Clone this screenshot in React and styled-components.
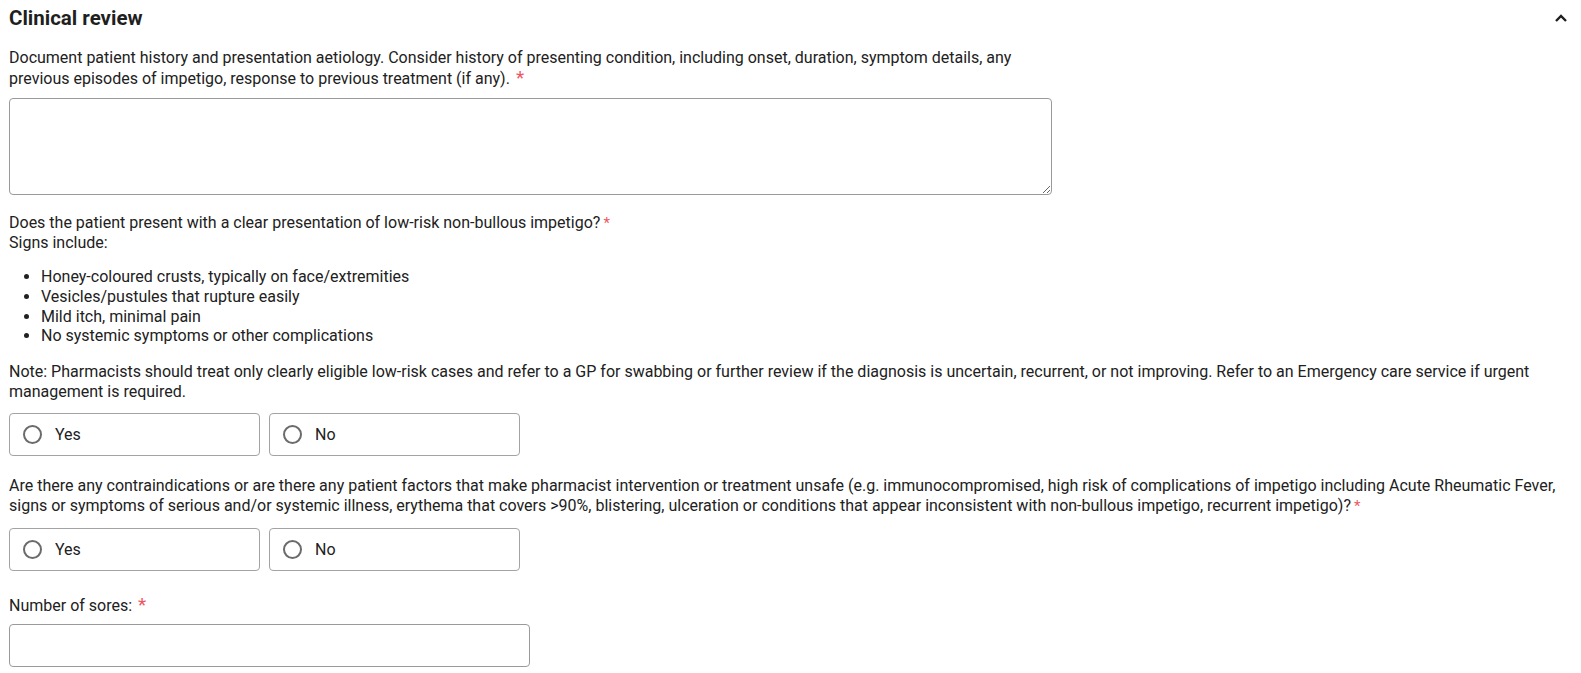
import React from "react";
import styled, { createGlobalStyle } from "styled-components";

const GlobalStyle = createGlobalStyle`
  body {
    margin: 0;
    background: #fff;
    font-family: Roboto, "Liberation Sans", sans-serif;
    color: #212121;
  }
`;

const Section = styled.section`
  padding: 0 9px;
  font-size: 16px;
`;

const Header = styled.div`
  height: 36px;
  display: flex;
  align-items: center;
  justify-content: space-between;
  padding-right: 4px;
`;

const Title = styled.h2`
  margin: 0;
  font-size: 20.5px;
  font-weight: 700;
  color: #1f1f1f;
`;

const Field = styled.div`
  margin-top: ${(p) => p.top || 0}px;
`;

const Label = styled.div`
  line-height: ${(p) => p.lh || 20}px;
  margin-top: ${(p) => p.top || 0}px;
  max-width: ${(p) => (p.narrow ? "1035px" : "none")};
`;

const Star = styled.span`
  color: #f0565f;
  font-size: ${(p) => (p.big ? "19px" : "15px")};
  margin-left: ${(p) => (p.big ? "6px" : "3px")};
  line-height: 1;
`;

const TextArea = styled.textarea`
  display: block;
  box-sizing: border-box;
  width: 1043px;
  height: 97px;
  margin-top: ${(p) => p.top || 0}px;
  border: 1px solid #9a9a9a;
  border-radius: 4px;
  font-family: inherit;
  font-size: 15px;
  resize: vertical;
`;

const Input = styled.input`
  display: block;
  box-sizing: border-box;
  width: 521px;
  height: 43px;
  margin-top: ${(p) => p.top || 0}px;
  border: 1px solid #9a9a9a;
  border-radius: 4px;
  font-family: inherit;
  font-size: 15px;
`;

const List = styled.ul`
  margin: 14px 0 0;
  padding-left: 32px;
  line-height: 19.8px;
`;

const Options = styled.div`
  display: flex;
  gap: 9px;
  margin-top: ${(p) => p.top || 0}px;
`;

const Option = styled.label`
  box-sizing: border-box;
  width: 251px;
  height: 43px;
  display: flex;
  align-items: center;
  gap: 13px;
  padding-left: 13px;
  border: 1px solid #a3a3a3;
  border-radius: 4px;
  font-size: 16px;
  cursor: pointer;
`;

const Circle = styled.span`
  box-sizing: border-box;
  width: 19px;
  height: 19px;
  border: 2px solid #6b6b6b;
  border-radius: 50%;
`;

function Chevron() {
  return (
    <svg width="14" height="10" viewBox="0 0 14 10">
      <path d="M2 8 L7 3 L12 8" fill="none" stroke="#1f1f1f" strokeWidth="2.4" />
    </svg>
  );
}

function YesNo({ top }) {
  return (
    <Options top={top}>
      <Option>
        <Circle />
        Yes
      </Option>
      <Option>
        <Circle />
        No
      </Option>
    </Options>
  );
}

export default function App() {
  return (
    <>
      <GlobalStyle />
      <Section>
        <Header>
          <Title>Clinical review</Title>
          <Chevron />
        </Header>

        <Field top={11}>
          <Label lh={21} narrow>
            Document patient history and presentation aetiology. Consider history of presenting
            condition, including onset, duration, symptom details, any previous episodes of
            impetigo, response to previous treatment (if any).<Star big>*</Star>
          </Label>
          <TextArea top={9} />
        </Field>

        <Field top={18}>
          <Label>
            Does the patient present with a clear presentation of low-risk non-bullous impetigo?
            <Star>*</Star>
            <br />
            Signs include:
          </Label>
          <List>
            <li>Honey-coloured crusts, typically on face/extremities</li>
            <li>Vesicles/pustules that rupture easily</li>
            <li>Mild itch, minimal pain</li>
            <li>No systemic symptoms or other complications</li>
          </List>
          <Label top={16}>
            Note: Pharmacists should treat only clearly eligible low-risk cases and refer to a GP
            for swabbing or further review if the diagnosis is uncertain, recurrent, or not
            improving. Refer to an Emergency care service if urgent management is required.
          </Label>
          <YesNo top={11} />
        </Field>

        <Field top={20}>
          <Label>
            Are there any contraindications or are there any patient factors that make pharmacist
            intervention or treatment unsafe (e.g. immunocompromised, high risk of complications of
            impetigo including Acute Rheumatic Fever, signs or symptoms of serious and/or systemic
            illness, erythema that covers &gt;90%, blistering, ulceration or conditions that appear
            inconsistent with non-bullous impetigo, recurrent impetigo)?<Star>*</Star>
          </Label>
          <YesNo top={12} />
        </Field>

        <Field top={24}>
          <Label>
            Number of sores:<Star big>*</Star>
          </Label>
          <Input top={8} />
        </Field>
      </Section>
    </>
  );
}
